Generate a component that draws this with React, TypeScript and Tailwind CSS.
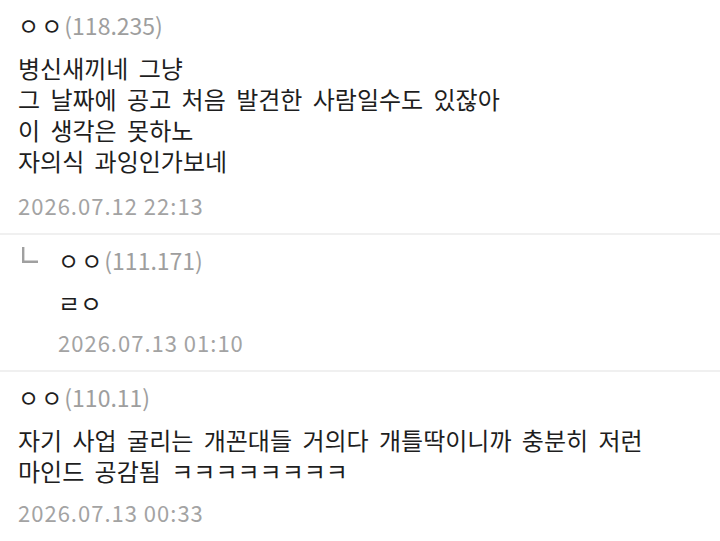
import React from 'react';

type Comment = {
  nick: string;
  ip: string;
  lines: string[];
  date: string;
  dateGap: string;
  reply?: boolean;
};

const comments: Comment[] = [
  {
    nick: 'ㅇㅇ',
    ip: '(118.235)',
    lines: ['병신새끼네 그냥', '그 날짜에 공고 처음 발견한 사람일수도 있잖아', '이 생각은 못하노', '자의식 과잉인가보네'],
    date: '2026.07.12 22:13',
    dateGap: 'mt-[14px]',
  },
  {
    nick: 'ㅇㅇ',
    ip: '(111.171)',
    lines: ['ㄹㅇ'],
    date: '2026.07.13 01:10',
    dateGap: 'mt-[9px]',
    reply: true,
  },
  {
    nick: 'ㅇㅇ',
    ip: '(110.11)',
    lines: ['자기 사업 굴리는 개꼰대들 거의다 개틀딱이니까 충분히 저런', '마인드 공감됨 ㅋㅋㅋㅋㅋㅋㅋㅋ'],
    date: '2026.07.13 00:33',
    dateGap: 'mt-[11px]',
  },
];

function CommentBody({ c }: { c: Comment }) {
  return (
    <div className="flex flex-col">
      <div className="text-[23px] leading-[30px]">
        <span className="text-[#1e1e1e] tracking-[2px]">{c.nick}</span>
        <span className="text-[#9e9e9e]">{c.ip}</span>
      </div>
      <div className="mt-[12px] text-[24px] leading-[31px] text-[#1e1e1e] [word-spacing:5px]">
        {c.lines.map((l, i) => (
          <div key={i}>{l}</div>
        ))}
      </div>
      <div className={`${c.dateGap} text-[22px] leading-[30px] tracking-[1px] text-[#a3a3a3]`}>{c.date}</div>
    </div>
  );
}

export default function App() {
  return (
    <div
      className="w-[720px] h-[541px] overflow-hidden bg-white"
      style={{ fontFamily: '"Noto Sans CJK KR", "Noto Sans", sans-serif' }}
    >
      {comments.map((c, i) => (
        <div key={i} className={i > 0 ? 'border-t-2 border-[#f0f0f0]' : ''}>
          {c.reply ? (
            <div className="flex pt-[10px] pb-[13px] pl-[22px]">
              <div className="w-[36px] pt-[2px]">
                <svg width="16" height="16" viewBox="0 0 16 16" className="block">
                  <path d="M1.2 0 V14.8 H16" fill="none" stroke="#a0a0a0" strokeWidth="2.4" />
                </svg>
              </div>
              <CommentBody c={c} />
            </div>
          ) : (
            <div className="pt-[10px] pb-[13px] pl-[18px]">
              <CommentBody c={c} />
            </div>
          )}
        </div>
      ))}
    </div>
  );
}
